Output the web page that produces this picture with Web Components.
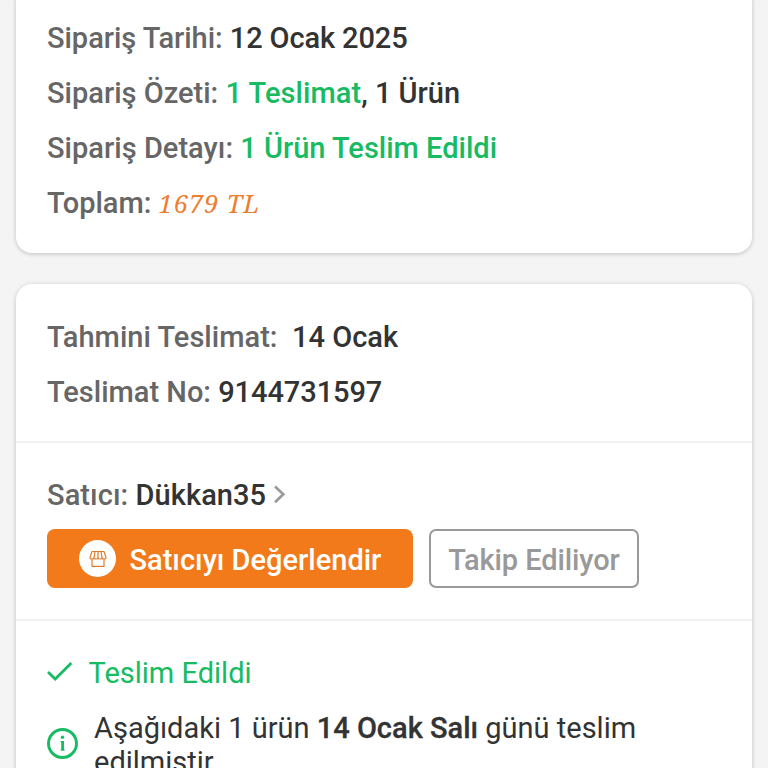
<!DOCTYPE html>
<html lang="tr">
<head>
<meta charset="utf-8">
<title>Sipariş Detayı</title>
<style>
html,body{margin:0;height:768px;overflow:hidden;background:#f4f4f4}
</style>
</head>
<body>
<order-page></order-page>
<script>
const define=(name,html,after)=>customElements.define(name,class extends HTMLElement{
  constructor(){super();this.attachShadow({mode:'open'}).innerHTML=html;}
  connectedCallback(){if(after)after(this);}
});

define('text-run',`<style>:host{display:inline;white-space:pre}:host([tone=dark]){color:#333}:host([tone=green]){color:#16bb62}
:host([tone=price]){color:#ec7f30;font:italic 400 25.5px "Noto Serif","DejaVu Serif","Liberation Serif",serif}</style><slot></slot>`,
 el=>{if(el.hasAttribute('track'))el.style.letterSpacing=el.getAttribute('track')+'px';});

define('info-row',`<style>:host{display:block;height:55.3px;line-height:55.3px;white-space:pre;color:#666;font-weight:500}</style><slot></slot>`);

define('surface-card',`<style>:host{display:block;box-sizing:border-box;background:#fff;border-radius:16px;box-shadow:0 1px 4px rgba(0,0,0,.22)}</style><slot></slot>`);

define('card-section',`<style>:host{display:block;box-sizing:border-box;padding:0 31px}:host([ruled]){border-bottom:2px solid #f2f2f2}</style><slot></slot>`);

define('store-icon',`<style>:host{display:flex;width:37px;height:37px;border-radius:50%;background:#fff;align-items:center;justify-content:center}svg{display:block}</style>
<svg width="18" height="18" viewBox="0 0 18 18" fill="none" stroke="#df7d2d" stroke-width="1.2" stroke-linejoin="round"><path d="M3 1.5H15L17 7.4Q17 9 15 9T13 7.7Q13 9 11 9T9 7.7Q9 9 7 9T5 7.7Q5 9 3 9T1 7.4Z"/><path d="M6 1.5L5 7.7M9 1.5V7.7M12 1.5L13 7.7M3 9V16.3H15V9"/></svg>`);

define('action-button',`<style>:host{display:flex;box-sizing:border-box;height:59px;border-radius:8px;align-items:center;font-weight:500;white-space:pre}
span{padding-top:2px}
:host([kind=primary]){width:366px;background:#f27a1a;color:#fff;padding-left:32px;gap:13.5px}
:host([kind=outline]){width:210px;border:2px solid #999;color:#999;justify-content:center;border-radius:7px;letter-spacing:-.1px}</style><slot name="icon"></slot><span><slot></slot></span>`);

define('seller-block',`<style>:host{display:block}.name{display:flex;align-items:center;height:56px;color:#666;font-weight:500;white-space:pre}.name svg{margin-left:6.5px}
.actions{display:flex;gap:16px;margin-top:6px}</style>
<div class="name"><text-run track=".07">Satıcı: </text-run><text-run tone="dark" track=".07">Dükkan35</text-run><svg width="13" height="20" viewBox="0 0 13 20" fill="none" stroke="#999" stroke-width="2.6"><path d="M2 1.5L10.3 9.3L2 17.2"/></svg></div>
<div class="actions"><action-button kind="primary"><store-icon slot="icon"></store-icon>Satıcıyı Değerlendir</action-button><action-button kind="outline">Takip Ediliyor</action-button></div>`);

define('delivery-status',`<style>:host{display:block}.state{display:flex;align-items:center;height:40px;gap:15.5px;color:#16bb62;white-space:pre}
.note{display:flex;gap:16px;margin-top:18px;line-height:34px;color:#333;white-space:pre}.note svg{margin-top:16.5px;flex:none}svg{display:block}.note b{font-weight:500;-webkit-text-stroke:.3px #333}</style>
<div class="state"><svg width="26" height="22" viewBox="0 0 26 22" fill="none" stroke="#16bb62" stroke-width="2.7"><path d="M1 10L8.2 17L24.3 1"/></svg><text-run>Teslim Edildi</text-run></div>
<div class="note"><svg width="31" height="31" viewBox="0 0 31 31" fill="none" stroke="#16bb62"><circle cx="15.5" cy="15.5" r="14" stroke-width="2.9"/><path d="M15.6 13V22.5" stroke-width="2.8"/><path d="M13.6 13.6H15.5M13.6 22H17.8" stroke-width="1.2"/><circle cx="15.5" cy="9.3" r="1.7" fill="#16bb62" stroke="none"/></svg><div>Aşağıdaki 1 ürün <b>14 Ocak Salı</b> günü teslim<br>edilmiştir.</div></div>`);

define('order-page',`<style>
:host{display:flex;flex-direction:column;gap:31px;height:768px;box-sizing:border-box;padding:0 16px;overflow:hidden;background:#f4f4f4;font:400 29px Roboto,"Liberation Sans",sans-serif}
surface-card{flex:none}.summary{height:269px;margin-top:-16px;padding-top:26.6px}.delivery{height:560px}
.dates{height:159px;padding-top:26px}.seller{height:178px;padding-top:24px}.status{padding-top:32px}
</style>
<surface-card class="summary"><card-section>
<info-row><text-run track="-.04">Sipariş Tarihi: </text-run><text-run tone="dark" track="-.12">12 Ocak 2025</text-run></info-row>
<info-row><text-run>Sipariş Özeti: </text-run><text-run tone="green" track=".06">1 Teslimat</text-run><text-run tone="dark">, 1 Ürün</text-run></info-row>
<info-row><text-run track=".03">Sipariş Detayı: </text-run><text-run tone="green">1 Ürün Teslim Edildi</text-run></info-row>
<info-row><text-run>Toplam: </text-run><text-run tone="price" track="0.9">1679 TL</text-run></info-row>
</card-section></surface-card>
<surface-card class="delivery">
<card-section class="dates" ruled><info-row><text-run track=".03">Tahmini Teslimat:  </text-run><text-run tone="dark">14 Ocak</text-run></info-row><info-row><text-run>Teslimat No: </text-run><text-run tone="dark" track="-.08">9144731597</text-run></info-row></card-section>
<card-section class="seller" ruled><seller-block></seller-block></card-section>
<card-section class="status"><delivery-status></delivery-status></card-section>
</surface-card>`);
</script>
</body>
</html>
